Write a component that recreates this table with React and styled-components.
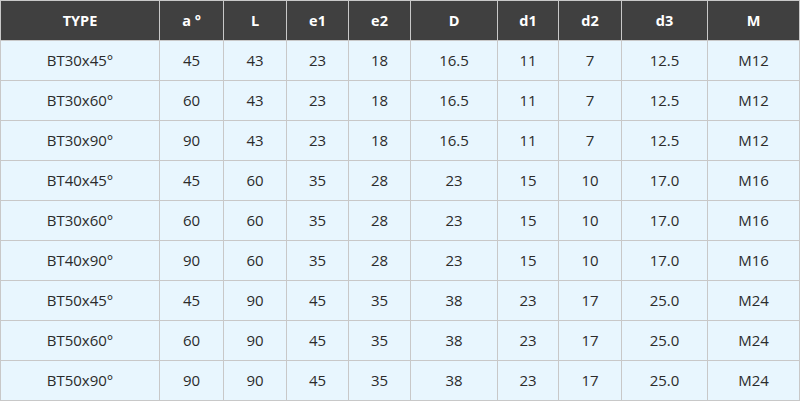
import React from "react";
import styled, { createGlobalStyle } from "styled-components";

const Global = createGlobalStyle`
  html, body { margin: 0; padding: 0; background: #ffffff; }
  body { font-family: "Open Sans", "Liberation Sans", sans-serif; }
`;

const widths = [159, 64, 63, 62, 62, 87, 61, 63, 86, 92];

const Grid = styled.div`
  display: grid;
  grid-template-columns: ${widths.map((w) => w + "px").join(" ")};
  width: 800px;
  box-sizing: border-box;
  border-left: 1px solid #c8c8c8;
  border-top: 1px solid #c8c8c8;
`;

const Cell = styled.div`
  box-sizing: border-box;
  height: 40px;
  display: flex;
  align-items: center;
  justify-content: center;
  border-right: 1px solid #c8c8c8;
  border-bottom: 1px solid #c8c8c8;
  font-size: ${(p) => (p.$head ? "14.5px" : "15px")};
  background: ${(p) => (p.$head ? "#404040" : "#e8f6fe")};
  color: ${(p) => (p.$head ? "#ffffff" : "#2b2b2b")};
  font-weight: ${(p) => (p.$head ? 700 : 400)};
  padding-bottom: 1px;
`;

const head = ["TYPE", "a °", "L", "e1", "e2", "D", "d1", "d2", "d3", "M"];
const rows = [
  ["BT30x45°", "45", "43", "23", "18", "16.5", "11", "7", "12.5", "M12"],
  ["BT30x60°", "60", "43", "23", "18", "16.5", "11", "7", "12.5", "M12"],
  ["BT30x90°", "90", "43", "23", "18", "16.5", "11", "7", "12.5", "M12"],
  ["BT40x45°", "45", "60", "35", "28", "23", "15", "10", "17.0", "M16"],
  ["BT30x60°", "60", "60", "35", "28", "23", "15", "10", "17.0", "M16"],
  ["BT40x90°", "90", "60", "35", "28", "23", "15", "10", "17.0", "M16"],
  ["BT50x45°", "45", "90", "45", "35", "38", "23", "17", "25.0", "M24"],
  ["BT50x60°", "60", "90", "45", "35", "38", "23", "17", "25.0", "M24"],
  ["BT50x90°", "90", "90", "45", "35", "38", "23", "17", "25.0", "M24"],
];

export default function App() {
  return (
    <>
      <Global />
      <Grid>
        {head.map((h, i) => (
          <Cell key={"h" + i} $head>
            {h}
          </Cell>
        ))}
        {rows.map((r, ri) =>
          r.map((c, ci) => <Cell key={ri + "-" + ci}>{c}</Cell>)
        )}
      </Grid>
    </>
  );
}
